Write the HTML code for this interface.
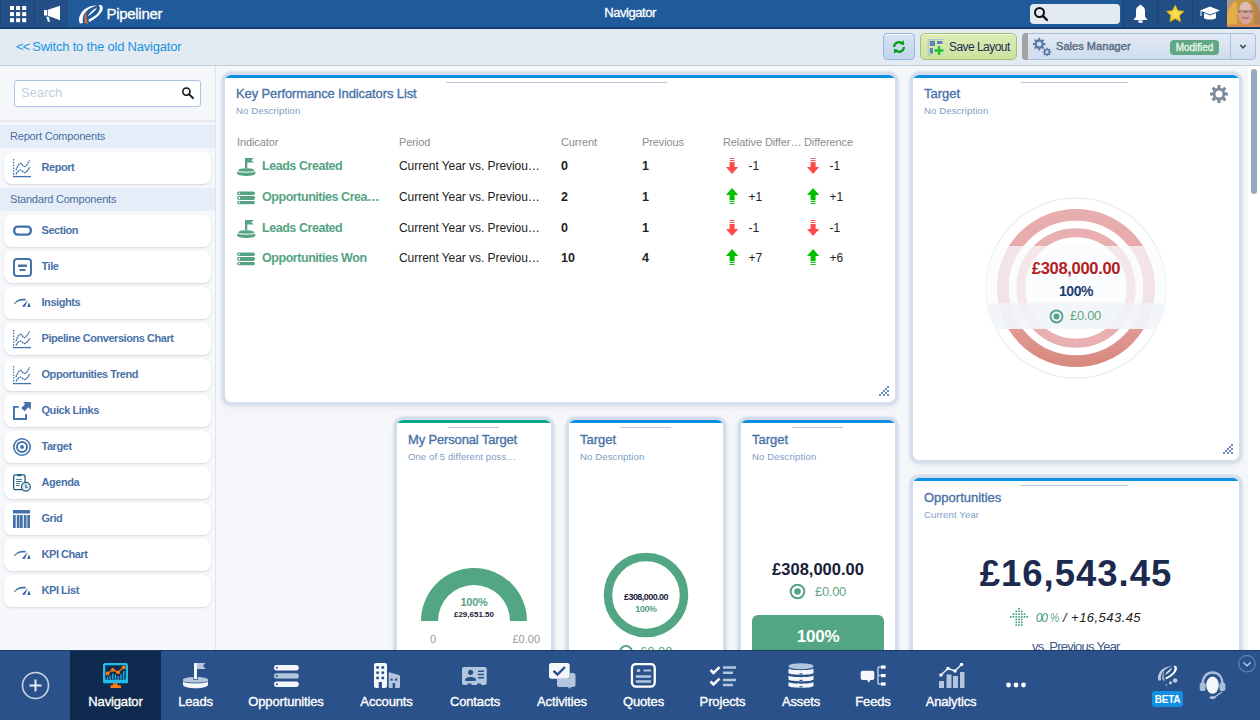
<!DOCTYPE html>
<html><head><meta charset="utf-8"><title>Navigator</title>
<style>
*{box-sizing:border-box;margin:0;padding:0}
html,body{width:1260px;height:720px;overflow:hidden;background:#f4f6fa;font-family:"Liberation Sans",sans-serif}
.a{position:absolute}
.t{position:absolute;white-space:nowrap}
.card{position:absolute;border:3px solid #d3deea;border-radius:9px;background:#fff;overflow:hidden;box-shadow:0 0 0 0.7px #dae2ec,0 2px 5px rgba(40,70,110,.10)}
.card .strip{position:absolute;left:0;top:0;right:0;height:3px}
.sbi{position:absolute;left:4px;width:207px;height:32px;background:#fff;border-radius:8px;box-shadow:0 1px 2px rgba(0,0,0,.13)}
</style></head><body>

<div class="a" style="left:216px;top:66px;width:1032px;height:584px;background:#f4f6fa"></div>
<div class="a" style="left:0px;top:66px;width:215px;height:584px;background:#f5f7fa"></div>
<div class="a" style="left:215px;top:66px;width:1px;height:584px;background:#dfe5ee"></div>
<div class="a" style="left:1248px;top:66px;width:12px;height:584px;background:#fff"></div>
<div class="a" style="left:1251px;top:69px;width:6px;height:125px;background:#94a8c0;border-radius:3px"></div>
<div class="a" style="left:0px;top:0px;width:1260px;height:27px;background:#1f5b9b"></div>
<div class="a" style="left:0px;top:27px;width:1260px;height:1px;background:#1a4676"></div>
<div class="a" style="left:0px;top:28px;width:1260px;height:1px;background:#0f3562"></div>
<div class="a" style="left:0px;top:0px;width:68px;height:27px;background:#234f86"></div>
<div class="a" style="left:0px;top:0px;width:1px;height:27px;background:#1b4373"></div>
<div class="a" style="left:34px;top:0px;width:1px;height:27px;background:#1d4576"></div>
<svg class="a" style="left:0px;top:0px" width="34" height="27" viewBox="0 0 34 27"><rect x="10.0" y="6.0" width="4" height="4" fill="#fff"/><rect x="16.1" y="6.0" width="4" height="4" fill="#fff"/><rect x="22.2" y="6.0" width="4" height="4" fill="#fff"/><rect x="10.0" y="12.1" width="4" height="4" fill="#fff"/><rect x="16.1" y="12.1" width="4" height="4" fill="#fff"/><rect x="22.2" y="12.1" width="4" height="4" fill="#fff"/><rect x="10.0" y="18.2" width="4" height="4" fill="#fff"/><rect x="16.1" y="18.2" width="4" height="4" fill="#fff"/><rect x="22.2" y="18.2" width="4" height="4" fill="#fff"/></svg>
<svg class="a" style="left:35px;top:0px" width="33" height="27" viewBox="0 0 33 27"><path d="M9 10 h3.3 v5.6 h-3.3z M13 9.8 L25 5.8 V20.3 L13 15.8 Z M11.3 16.8 h2.4 l1.3 5 h-2.1z" fill="#fff"/></svg>
<svg class="a" style="left:76px;top:2px" width="30" height="24" viewBox="0 0 30 24"><path d="M4 21.5 C1.5 17 4 11 9 7 C13 4 18 3 21 3.5 C17 4.5 13 6.5 10.5 9 C7.5 12 6 16 7 21 Z" fill="#fff"/><path d="M22.5 3 C26 2.5 27.5 4.5 26.5 8 C25 12 20 16.5 13 20 L12.5 17.5 C18 15 22.5 11.5 23.5 8 C24.3 5.5 23.5 4 22.5 3 Z" fill="#fff"/><path d="M12 14 C14 10 18 7 21 5.5 C20 8 17 11 12.5 14 Z" fill="#fff"/><path d="M10.5 9.5 C9 12 8 16 8.5 19 C9 21 10 22 12 21.5 C10.5 19 10 14 10.5 9.5 Z" fill="#f26b3a"/></svg>
<div class="t" style="left:106.5px;top:6.00px;font-size:15px;line-height:15px;color:#fff;font-weight:normal;letter-spacing:-0.3px;-webkit-text-stroke:0.3px #fff">Pipeliner</div>
<div class="t" style="left:430.00px;width:400px;text-align:center;top:6.00px;font-size:13px;line-height:13px;color:#fff;font-weight:normal;letter-spacing:-0.45px;-webkit-text-stroke:0.3px #fff">Navigator</div>
<div class="a" style="left:1030px;top:4px;width:90px;height:20px;background:#e4eaf2;border-radius:4px"></div>
<svg class="a" style="left:1033px;top:6px" width="16" height="16" viewBox="0 0 16 16"><circle cx="6.5" cy="6.5" r="4.5" stroke="#111" stroke-width="2" fill="none"/><path d="M9.8 9.8 L14 14" stroke="#111" stroke-width="2.4" stroke-linecap="round"/></svg>
<div class="a" style="left:1122px;top:0px;width:105px;height:27px;background:#214f85"></div>
<div class="a" style="left:1122px;top:0px;width:1px;height:27px;background:#1b4373"></div>
<div class="a" style="left:1157px;top:0px;width:1px;height:27px;background:#1b4373"></div>
<div class="a" style="left:1192px;top:0px;width:1px;height:27px;background:#1b4373"></div>
<svg class="a" style="left:1123px;top:0px" width="34" height="27" viewBox="0 0 34 27"><circle cx="17.5" cy="6.3" r="1.6" fill="#fff"/><path d="M17.5 6 C14 6 13 8.5 13 11 V16 C13 17.5 11.5 18.5 10.3 19.9 H24.7 C23.5 18.5 22 17.5 22 16 V11 C22 8.5 21 6 17.5 6Z" fill="#fff"/><ellipse cx="17.5" cy="21.6" rx="2.5" ry="1.4" fill="#fff"/></svg>
<svg class="a" style="left:1158px;top:0px" width="34" height="27" viewBox="0 0 34 27"><defs><radialGradient id="stg" cx="0.5" cy="0.55" r="0.6"><stop offset="0" stop-color="#ffe866"/><stop offset="1" stop-color="#f0b400"/></radialGradient></defs><path d="M17.20 4.70 L19.90 10.48 L26.24 11.26 L21.57 15.62 L22.78 21.89 L17.20 18.80 L11.62 21.89 L12.83 15.62 L8.16 11.26 L14.50 10.48Z" fill="url(#stg)" stroke="#e0a800" stroke-width="0.4" stroke-linejoin="round"/></svg>
<svg class="a" style="left:1193px;top:0px" width="34" height="27" viewBox="0 0 34 27"><path d="M7 10.5 L17 6.5 L27 10.5 L17 14.5 Z" fill="#fff"/><path d="M11 13 v5 c2 2 10 2 12 0 v-5 l-6 2.5z" fill="#fff"/><path d="M8 11 v5" stroke="#fff" stroke-width="1"/></svg>
<svg class="a" style="left:1227px;top:0px" width="33" height="27" viewBox="0 0 33 27"><defs><filter id="bl" x="-10%" y="-10%" width="120%" height="120%"><feGaussianBlur stdDeviation="0.7"/></filter><clipPath id="avc"><rect width="33" height="27"/></clipPath></defs><g clip-path="url(#avc)"><rect width="33" height="27" fill="#a89c8c"/><g filter="url(#bl)"><path d="M-2 30 C-3 15 2 -2 16 -2 C30 -2 36 12 35 30Z" fill="#c99545"/><path d="M-2 28 C-2 18 1 6 9 1 C12 8 9 20 10 28Z" fill="#e5ad48"/><path d="M26 28 C27 18 29 8 24 1 C32 3 35 15 35 28Z" fill="#b48550"/><ellipse cx="18.5" cy="13.5" rx="7.2" ry="11" fill="#d4a596"/><ellipse cx="18.5" cy="7" rx="5.5" ry="5" fill="#dcbcb4"/><path d="M11.5 10.5 H25.5 V12.8 H11.5Z" fill="#8a6a60"/><ellipse cx="15" cy="12.5" rx="2.2" ry="1.3" fill="#c9a090"/><ellipse cx="22" cy="12.5" rx="2.2" ry="1.3" fill="#c9a090"/><path d="M15 17.5 Q18.5 19 22 17.5" stroke="#9a5a50" stroke-width="1.2" fill="none"/><rect x="0" y="24.5" width="33" height="3" fill="#d88a50"/></g></g></svg>
<div class="a" style="left:0px;top:29px;width:1260px;height:36px;background:#e4eaf2"></div>
<div class="a" style="left:0px;top:65px;width:1260px;height:1px;background:#c3cedb"></div>
<div class="t" style="left:16px;top:40.00px;font-size:13px;line-height:13px;color:#1a94e2;font-weight:normal;letter-spacing:-0.2px"><span style="letter-spacing:-1.2px">&lt;&lt;</span> Switch to the old Navigator</div>
<div class="a" style="left:883px;top:33px;width:32px;height:27px;background:linear-gradient(#d6e3f2,#c2d5ec);border:1px solid #8fb8e4;border-radius:4px;box-shadow:inset 0 1px 0 rgba(255,255,255,.9)"></div>
<svg class="a" style="left:883px;top:33px" width="32" height="27" viewBox="0 0 32 27"><g transform="rotate(-12 16 14)"><path d="M11.2 13 A4.9 4.9 0 0 1 19.8 11" stroke="#0d9c1c" stroke-width="2.3" fill="none"/><path d="M22.2 8.3 L21.5 13.3 L17.2 11.2Z" fill="#0d9c1c"/><path d="M20.8 15 A4.9 4.9 0 0 1 12.2 17" stroke="#0d9c1c" stroke-width="2.3" fill="none"/><path d="M9.8 19.7 L10.5 14.7 L14.8 16.8Z" fill="#0d9c1c"/></g></svg>
<div class="a" style="left:920px;top:33px;width:97px;height:27px;background:linear-gradient(#dcecb6,#cde2a0);border:1px solid #a3c176;border-radius:5px;box-shadow:inset 0 1px 0 rgba(255,255,255,.6)"></div>
<svg class="a" style="left:927px;top:37px" width="20" height="20" viewBox="0 0 20 20"><path d="M16 2.5 H1.2 V17.8 H4" stroke="#a9c1de" stroke-width="0.9" fill="none"/><rect x="2.8" y="3.8" width="5.2" height="5.2" fill="#5b84b8"/><rect x="10" y="4" width="5.5" height="3" fill="#5b84b8"/><rect x="2.8" y="11" width="3.2" height="5.5" fill="#5b84b8"/><path d="M12 9 V18 M7.5 13.5 H16.5" stroke="#1ec23a" stroke-width="2.4"/></svg>
<div class="t" style="left:949px;top:41.00px;font-size:12px;line-height:12px;color:#1e2d55;font-weight:normal;letter-spacing:-0.55px">Save Layout</div>
<div class="a" style="left:1022px;top:33px;width:234px;height:27px;background:linear-gradient(#e2eaf5,#cfdcec);border:1px solid #a4bfdf;border-radius:4px"></div>
<div class="a" style="left:1022px;top:33px;width:6px;height:27px;background:#a3a3a3;border-radius:4px 0 0 4px"></div>
<div class="a" style="left:1230px;top:33px;width:1px;height:27px;background:#a4bfdf"></div>
<svg class="a" style="left:1031px;top:35px" width="22" height="24" viewBox="0 0 22 24"><g fill="#5b7ca5"><circle cx="8.2" cy="9.1" r="4.7"/><circle cx="16" cy="16.9" r="3.1"/></g><rect x="7.2" y="2.8" width="2" height="2.6" fill="#5b7ca5" transform="rotate(0 8.2 9.1)"/><rect x="7.2" y="2.8" width="2" height="2.6" fill="#5b7ca5" transform="rotate(45 8.2 9.1)"/><rect x="7.2" y="2.8" width="2" height="2.6" fill="#5b7ca5" transform="rotate(90 8.2 9.1)"/><rect x="7.2" y="2.8" width="2" height="2.6" fill="#5b7ca5" transform="rotate(135 8.2 9.1)"/><rect x="7.2" y="2.8" width="2" height="2.6" fill="#5b7ca5" transform="rotate(180 8.2 9.1)"/><rect x="7.2" y="2.8" width="2" height="2.6" fill="#5b7ca5" transform="rotate(225 8.2 9.1)"/><rect x="7.2" y="2.8" width="2" height="2.6" fill="#5b7ca5" transform="rotate(270 8.2 9.1)"/><rect x="7.2" y="2.8" width="2" height="2.6" fill="#5b7ca5" transform="rotate(315 8.2 9.1)"/><rect x="15.25" y="12.7" width="1.5" height="1.9" fill="#5b7ca5" transform="rotate(0 16 16.9)"/><rect x="15.25" y="12.7" width="1.5" height="1.9" fill="#5b7ca5" transform="rotate(45 16 16.9)"/><rect x="15.25" y="12.7" width="1.5" height="1.9" fill="#5b7ca5" transform="rotate(90 16 16.9)"/><rect x="15.25" y="12.7" width="1.5" height="1.9" fill="#5b7ca5" transform="rotate(135 16 16.9)"/><rect x="15.25" y="12.7" width="1.5" height="1.9" fill="#5b7ca5" transform="rotate(180 16 16.9)"/><rect x="15.25" y="12.7" width="1.5" height="1.9" fill="#5b7ca5" transform="rotate(225 16 16.9)"/><rect x="15.25" y="12.7" width="1.5" height="1.9" fill="#5b7ca5" transform="rotate(270 16 16.9)"/><rect x="15.25" y="12.7" width="1.5" height="1.9" fill="#5b7ca5" transform="rotate(315 16 16.9)"/><circle cx="8.2" cy="9.1" r="2.4" fill="#d6e1ee"/><circle cx="16" cy="16.9" r="1.6" fill="#d2ddeb"/></svg>
<div class="t" style="left:1056px;top:41.00px;font-size:11px;line-height:11px;color:#5a6d85;font-weight:normal;letter-spacing:0.05px;-webkit-text-stroke:0.45px #5a6d85">Sales Manager</div>
<div class="a" style="left:1170px;top:40px;width:49px;height:15px;background:#5fa882;border-radius:4px"></div>
<div class="t" style="left:1164.50px;width:60px;text-align:center;top:43.00px;font-size:10px;line-height:10px;color:#e6f3ea;font-weight:normal;letter-spacing:-0.05px;-webkit-text-stroke:0.35px #e6f3ea">Modified</div>
<svg class="a" style="left:1231px;top:33px" width="25" height="27" viewBox="0 0 25 27"><path d="M9.3 12 L12 14.8 L14.7 12" stroke="#33465f" stroke-width="1.5" fill="none"/></svg>
<div class="a" style="left:14px;top:80px;width:187px;height:27px;background:#fff;border:1px solid #a9c5e8;border-radius:3px"></div>
<div class="t" style="left:21px;top:86.00px;font-size:13px;line-height:13px;color:#c3cfdf;font-weight:normal;">Search</div>
<svg class="a" style="left:178px;top:84px" width="18" height="18" viewBox="0 0 18 18"><circle cx="8.4" cy="7.6" r="3.6" stroke="#111" stroke-width="1.6" fill="none"/><path d="M11 10.2 L15 14.2" stroke="#111" stroke-width="1.9" stroke-linecap="round"/></svg>
<div class="a" style="left:0px;top:120px;width:215px;height:2px;background:linear-gradient(#eef0f3,#dfe2e7)"></div>
<div class="a" style="left:0px;top:125px;width:215px;height:23px;background:#e5edf8"></div>
<div class="t" style="left:10px;top:131.00px;font-size:11px;line-height:11px;color:#4a6fa0;font-weight:normal;letter-spacing:-0.2px">Report Components</div>
<div class="a" style="left:0px;top:188px;width:215px;height:23px;background:#e5edf8"></div>
<div class="t" style="left:10px;top:194.00px;font-size:11px;line-height:11px;color:#4a6fa0;font-weight:normal;letter-spacing:-0.2px">Standard Components</div>
<div class="sbi" style="top:152px"></div>
<svg class="a" style="left:13px;top:159px" width="22" height="22" viewBox="0 0 22 22"><path d="M0.6 0 V17" stroke="#4272aa" stroke-width="1.2" stroke-dasharray="1.5 1.3"/><path d="M0 17.6 H18" stroke="#4272aa" stroke-width="1.3"/><path d="M2.9 11.4 C4.5 7 6 4.3 7.5 4.3 C9 4.3 10 7.7 11.25 7.7 C13 7.7 15 4 16.7 1.2" stroke="#4272aa" stroke-width="1.25" fill="none" stroke-dasharray="2.2 0.5"/><path d="M3 15.5 C4.5 12.5 6 11 7.5 11 C9 11 10 13.7 11.5 13.7 C13 13.7 15 11 17 8" stroke="#4272aa" stroke-width="1.25" fill="none" stroke-dasharray="2.2 0.5"/></svg>
<div class="t" style="left:41.5px;top:162.00px;font-size:11px;line-height:11px;color:#4a72a8;font-weight:bold;letter-spacing:-0.45px">Report</div>
<div class="sbi" style="top:215px"></div>
<svg class="a" style="left:13px;top:222px" width="22" height="22" viewBox="0 0 22 22"><rect x="1.2" y="4.6" width="16.6" height="8" rx="3.5" stroke="#4272aa" stroke-width="2.4" fill="none"/></svg>
<div class="t" style="left:41.5px;top:225.00px;font-size:11px;line-height:11px;color:#4a72a8;font-weight:bold;letter-spacing:-0.45px">Section</div>
<div class="sbi" style="top:251px"></div>
<svg class="a" style="left:13px;top:258px" width="22" height="22" viewBox="0 0 22 22"><rect x="1" y="1" width="17" height="17" rx="3" stroke="#4272aa" stroke-width="2" fill="none"/><rect x="5" y="6.5" width="9" height="2.5" fill="#4272aa"/><rect x="6.5" y="11" width="6" height="2" fill="#4272aa"/></svg>
<div class="t" style="left:41.5px;top:261.00px;font-size:11px;line-height:11px;color:#4a72a8;font-weight:bold;letter-spacing:-0.45px">Tile</div>
<div class="sbi" style="top:287px"></div>
<svg class="a" style="left:13px;top:294px" width="22" height="22" viewBox="0 0 22 22"><path d="M1 10 C3 6 8 4.3 12.8 5 L12.3 6.7 C8 5.9 4 7 1.6 10.3Z" fill="#4272aa"/><path d="M14.9 6.1 L9.4 11.9 C9.8 13 11.2 13.4 12 12.6Z" fill="#2d5d9f"/><path d="M15.9 8.4 L14.3 12.9 H17.3 C17.1 11 16.6 9.6 15.9 8.4Z" fill="#2d5d9f"/></svg>
<div class="t" style="left:41.5px;top:297.00px;font-size:11px;line-height:11px;color:#4a72a8;font-weight:bold;letter-spacing:-0.45px">Insights</div>
<div class="sbi" style="top:323px"></div>
<svg class="a" style="left:13px;top:330px" width="22" height="22" viewBox="0 0 22 22"><path d="M0.6 0 V17" stroke="#4272aa" stroke-width="1.2" stroke-dasharray="1.5 1.3"/><path d="M0 17.6 H18" stroke="#4272aa" stroke-width="1.3"/><path d="M2.9 11.4 C4.5 7 6 4.3 7.5 4.3 C9 4.3 10 7.7 11.25 7.7 C13 7.7 15 4 16.7 1.2" stroke="#4272aa" stroke-width="1.25" fill="none" stroke-dasharray="2.2 0.5"/><path d="M3 15.5 C4.5 12.5 6 11 7.5 11 C9 11 10 13.7 11.5 13.7 C13 13.7 15 11 17 8" stroke="#4272aa" stroke-width="1.25" fill="none" stroke-dasharray="2.2 0.5"/></svg>
<div class="t" style="left:41.5px;top:333.00px;font-size:11px;line-height:11px;color:#4a72a8;font-weight:bold;letter-spacing:-0.45px">Pipeline Conversions Chart</div>
<div class="sbi" style="top:359px"></div>
<svg class="a" style="left:13px;top:366px" width="22" height="22" viewBox="0 0 22 22"><path d="M0.6 0 V17" stroke="#4272aa" stroke-width="1.2" stroke-dasharray="1.5 1.3"/><path d="M0 17.6 H18" stroke="#4272aa" stroke-width="1.3"/><path d="M2.9 11.4 C4.5 7 6 4.3 7.5 4.3 C9 4.3 10 7.7 11.25 7.7 C13 7.7 15 4 16.7 1.2" stroke="#4272aa" stroke-width="1.25" fill="none" stroke-dasharray="2.2 0.5"/><path d="M3 15.5 C4.5 12.5 6 11 7.5 11 C9 11 10 13.7 11.5 13.7 C13 13.7 15 11 17 8" stroke="#4272aa" stroke-width="1.25" fill="none" stroke-dasharray="2.2 0.5"/></svg>
<div class="t" style="left:41.5px;top:369.00px;font-size:11px;line-height:11px;color:#4a72a8;font-weight:bold;letter-spacing:-0.45px">Opportunities Trend</div>
<div class="sbi" style="top:395px"></div>
<svg class="a" style="left:13px;top:400px" width="22" height="22" viewBox="0 0 22 22"><path d="M5.8 6.9 H0.95 V19.05 H13.05 V14" stroke="#4272aa" stroke-width="1.9" fill="none"/><path d="M10 1.9 H17.9 V9.8 L15.4 7.3 L11.6 11.2 L8.3 7.9 L12.1 4.1 Z" fill="#4272aa"/></svg>
<div class="t" style="left:41.5px;top:405.00px;font-size:11px;line-height:11px;color:#4a72a8;font-weight:bold;letter-spacing:-0.45px">Quick Links</div>
<div class="sbi" style="top:431px"></div>
<svg class="a" style="left:13px;top:438px" width="22" height="22" viewBox="0 0 22 22"><circle cx="9" cy="9" r="8.2" stroke="#4272aa" stroke-width="1.6" fill="none"/><circle cx="9" cy="9" r="5" stroke="#4272aa" stroke-width="2" fill="none"/><circle cx="9" cy="9" r="2" fill="#4272aa"/></svg>
<div class="t" style="left:41.5px;top:441.00px;font-size:11px;line-height:11px;color:#4a72a8;font-weight:bold;letter-spacing:-0.45px">Target</div>
<div class="sbi" style="top:467px"></div>
<svg class="a" style="left:13px;top:474px" width="22" height="22" viewBox="0 0 22 22"><rect x="0.65" y="0.9" width="11.4" height="14.8" rx="1.6" stroke="#1e5a7c" stroke-width="1.3" fill="none"/><rect x="4.4" y="0.3" width="4" height="1.9" rx="0.5" fill="#1e5a7c"/><path d="M3.1 5.4 H9 M3.1 7.5 H9 M3.1 9.5 H6.8 M3.1 11.5 H6.8" stroke="#1e5a7c" stroke-width="0.85"/><circle cx="12.9" cy="12.8" r="4.4" fill="#e2e9f2" stroke="#1e5a7c" stroke-width="1.2"/><path d="M12.9 10.5 V13.5 H14.6" stroke="#1e5a7c" stroke-width="1" fill="none"/></svg>
<div class="t" style="left:41.5px;top:477.00px;font-size:11px;line-height:11px;color:#4a72a8;font-weight:bold;letter-spacing:-0.45px">Agenda</div>
<div class="sbi" style="top:503px"></div>
<svg class="a" style="left:13px;top:510px" width="22" height="22" viewBox="0 0 22 22"><rect x="0" y="0" width="17" height="3.5" fill="#4272aa"/><rect x="0" y="5" width="2.7" height="13" fill="#4272aa"/><rect x="3.8" y="5" width="2.7" height="13" fill="#4272aa"/><rect x="7" y="5" width="2.7" height="13" fill="#4272aa"/><rect x="10.8" y="5" width="2.7" height="13" fill="#4272aa"/><rect x="14.3" y="5" width="2.7" height="13" fill="#4272aa"/></svg>
<div class="t" style="left:41.5px;top:513.00px;font-size:11px;line-height:11px;color:#4a72a8;font-weight:bold;letter-spacing:-0.45px">Grid</div>
<div class="sbi" style="top:539px"></div>
<svg class="a" style="left:13px;top:546px" width="22" height="22" viewBox="0 0 22 22"><path d="M1 10 C3 6 8 4.3 12.8 5 L12.3 6.7 C8 5.9 4 7 1.6 10.3Z" fill="#4272aa"/><path d="M14.9 6.1 L9.4 11.9 C9.8 13 11.2 13.4 12 12.6Z" fill="#2d5d9f"/><path d="M15.9 8.4 L14.3 12.9 H17.3 C17.1 11 16.6 9.6 15.9 8.4Z" fill="#2d5d9f"/></svg>
<div class="t" style="left:41.5px;top:549.00px;font-size:11px;line-height:11px;color:#4a72a8;font-weight:bold;letter-spacing:-0.45px">KPI Chart</div>
<div class="sbi" style="top:575px"></div>
<svg class="a" style="left:13px;top:582px" width="22" height="22" viewBox="0 0 22 22"><path d="M1 10 C3 6 8 4.3 12.8 5 L12.3 6.7 C8 5.9 4 7 1.6 10.3Z" fill="#4272aa"/><path d="M14.9 6.1 L9.4 11.9 C9.8 13 11.2 13.4 12 12.6Z" fill="#2d5d9f"/><path d="M15.9 8.4 L14.3 12.9 H17.3 C17.1 11 16.6 9.6 15.9 8.4Z" fill="#2d5d9f"/></svg>
<div class="t" style="left:41.5px;top:585.00px;font-size:11px;line-height:11px;color:#4a72a8;font-weight:bold;letter-spacing:-0.45px">KPI List</div>
<div class="card" style="left:222px;top:72px;width:676px;height:333px"><div class="strip" style="background:#0a8fe3"></div></div>
<div class="a" style="left:446px;top:82px;width:221px;height:1px;background:#b9cadf"></div>
<div class="t" style="left:236px;top:87.00px;font-size:13px;line-height:13px;color:#4a72a8;font-weight:normal;letter-spacing:-0.12px;-webkit-text-stroke:0.35px #4a72a8">Key Performance Indicators List</div>
<div class="t" style="left:236px;top:106.00px;font-size:9.5px;line-height:9.5px;color:#7a9bc4;font-weight:normal;letter-spacing:0.15px">No Description</div>
<div class="t" style="left:237px;top:137.00px;font-size:11px;line-height:11px;color:#8c8c8c;font-weight:normal;letter-spacing:-0.1px">Indicator</div>
<div class="t" style="left:399px;top:137.00px;font-size:11px;line-height:11px;color:#8c8c8c;font-weight:normal;letter-spacing:-0.1px">Period</div>
<div class="t" style="left:561px;top:137.00px;font-size:11px;line-height:11px;color:#8c8c8c;font-weight:normal;letter-spacing:-0.1px">Current</div>
<div class="t" style="left:642px;top:137.00px;font-size:11px;line-height:11px;color:#8c8c8c;font-weight:normal;letter-spacing:-0.1px">Previous</div>
<div class="t" style="left:723px;top:137.00px;font-size:11px;line-height:11px;color:#8c8c8c;font-weight:normal;letter-spacing:-0.1px">Relative Differ…</div>
<div class="t" style="left:804px;top:137.00px;font-size:11px;line-height:11px;color:#8c8c8c;font-weight:normal;letter-spacing:-0.1px">Difference</div>
<svg class="a" style="left:237px;top:158px" width="20" height="19" viewBox="0 0 20 19"><path d="M8 0 H17 L14.2 2.2 L17 4.4 H10.3 V10 H8Z" fill="#55a383"/><path d="M1 12.8 C1 9.5 17.5 9.5 17.5 12.8 C15 14 3.5 14 1 12.8Z" fill="#55a383"/><path d="M0.2 13.6 C3 15.2 15.5 15.2 18.3 13.6 V16 C16 18.6 2.5 18.6 0.2 16Z" fill="#55a383"/></svg>
<div class="t" style="left:262px;top:160.00px;font-size:12.5px;line-height:12.5px;color:#55a383;font-weight:bold;letter-spacing:-0.45px">Leads Created</div>
<div class="t" style="left:399px;top:160.00px;font-size:12px;line-height:12px;color:#222;font-weight:normal;letter-spacing:-0.05px">Current Year vs. Previou…</div>
<div class="t" style="left:561px;top:160.00px;font-size:12.5px;line-height:12.5px;color:#222;font-weight:bold;">0</div>
<div class="t" style="left:642px;top:160.00px;font-size:12.5px;line-height:12.5px;color:#222;font-weight:bold;">1</div>
<svg class="a" style="left:726px;top:157px" width="13" height="18" viewBox="0 0 13 18"><rect x="3.6" y="1" width="5" height="1" fill="#ff5a5a"/><rect x="3.6" y="3" width="5" height="1" fill="#ff5a5a"/><path d="M3.6 5 H8.6 V10 H12.2 L6.1 17 L0 10 H3.6Z" fill="#ff4a4a"/></svg>
<div class="t" style="left:748.5px;top:160.00px;font-size:12px;line-height:12px;color:#222;font-weight:normal;">-1</div>
<svg class="a" style="left:807px;top:157px" width="13" height="18" viewBox="0 0 13 18"><rect x="3.6" y="1" width="5" height="1" fill="#ff5a5a"/><rect x="3.6" y="3" width="5" height="1" fill="#ff5a5a"/><path d="M3.6 5 H8.6 V10 H12.2 L6.1 17 L0 10 H3.6Z" fill="#ff4a4a"/></svg>
<div class="t" style="left:829.5px;top:160.00px;font-size:12px;line-height:12px;color:#222;font-weight:normal;">-1</div>
<svg class="a" style="left:236px;top:191px" width="20" height="15" viewBox="0 0 20 15"><rect x="1" y="0.5" width="18" height="3.5" rx="1.75" fill="#55a383"/><rect x="1" y="5" width="18" height="3.9" rx="1.9" fill="#55a383"/><rect x="1" y="9.9" width="18" height="3.4" rx="1.7" fill="#55a383"/><circle cx="3.3" cy="2.25" r="0.8" fill="#fff"/><rect x="2.6" y="5.9" width="1.3" height="2.2" fill="#fff"/><circle cx="3.3" cy="11.6" r="0.8" fill="#fff"/></svg>
<div class="t" style="left:262px;top:191.00px;font-size:12.5px;line-height:12.5px;color:#55a383;font-weight:bold;letter-spacing:-0.45px">Opportunities Crea…</div>
<div class="t" style="left:399px;top:191.00px;font-size:12px;line-height:12px;color:#222;font-weight:normal;letter-spacing:-0.05px">Current Year vs. Previou…</div>
<div class="t" style="left:561px;top:191.00px;font-size:12.5px;line-height:12.5px;color:#222;font-weight:bold;">2</div>
<div class="t" style="left:642px;top:191.00px;font-size:12.5px;line-height:12.5px;color:#222;font-weight:bold;">1</div>
<svg class="a" style="left:726px;top:188px" width="13" height="18" viewBox="0 0 13 18"><path d="M6.1 0 L12.2 7 H8.6 V12.2 H3.6 V7 H0Z" fill="#00c000"/><rect x="3.6" y="13" width="5" height="1" fill="#11c511"/><rect x="3.6" y="15" width="5" height="1" fill="#11c511"/></svg>
<div class="t" style="left:748.5px;top:191.00px;font-size:12px;line-height:12px;color:#222;font-weight:normal;">+1</div>
<svg class="a" style="left:807px;top:188px" width="13" height="18" viewBox="0 0 13 18"><path d="M6.1 0 L12.2 7 H8.6 V12.2 H3.6 V7 H0Z" fill="#00c000"/><rect x="3.6" y="13" width="5" height="1" fill="#11c511"/><rect x="3.6" y="15" width="5" height="1" fill="#11c511"/></svg>
<div class="t" style="left:829.5px;top:191.00px;font-size:12px;line-height:12px;color:#222;font-weight:normal;">+1</div>
<svg class="a" style="left:237px;top:220px" width="20" height="19" viewBox="0 0 20 19"><path d="M8 0 H17 L14.2 2.2 L17 4.4 H10.3 V10 H8Z" fill="#55a383"/><path d="M1 12.8 C1 9.5 17.5 9.5 17.5 12.8 C15 14 3.5 14 1 12.8Z" fill="#55a383"/><path d="M0.2 13.6 C3 15.2 15.5 15.2 18.3 13.6 V16 C16 18.6 2.5 18.6 0.2 16Z" fill="#55a383"/></svg>
<div class="t" style="left:262px;top:222.00px;font-size:12.5px;line-height:12.5px;color:#55a383;font-weight:bold;letter-spacing:-0.45px">Leads Created</div>
<div class="t" style="left:399px;top:222.00px;font-size:12px;line-height:12px;color:#222;font-weight:normal;letter-spacing:-0.05px">Current Year vs. Previou…</div>
<div class="t" style="left:561px;top:222.00px;font-size:12.5px;line-height:12.5px;color:#222;font-weight:bold;">0</div>
<div class="t" style="left:642px;top:222.00px;font-size:12.5px;line-height:12.5px;color:#222;font-weight:bold;">1</div>
<svg class="a" style="left:726px;top:219px" width="13" height="18" viewBox="0 0 13 18"><rect x="3.6" y="1" width="5" height="1" fill="#ff5a5a"/><rect x="3.6" y="3" width="5" height="1" fill="#ff5a5a"/><path d="M3.6 5 H8.6 V10 H12.2 L6.1 17 L0 10 H3.6Z" fill="#ff4a4a"/></svg>
<div class="t" style="left:748.5px;top:222.00px;font-size:12px;line-height:12px;color:#222;font-weight:normal;">-1</div>
<svg class="a" style="left:807px;top:219px" width="13" height="18" viewBox="0 0 13 18"><rect x="3.6" y="1" width="5" height="1" fill="#ff5a5a"/><rect x="3.6" y="3" width="5" height="1" fill="#ff5a5a"/><path d="M3.6 5 H8.6 V10 H12.2 L6.1 17 L0 10 H3.6Z" fill="#ff4a4a"/></svg>
<div class="t" style="left:829.5px;top:222.00px;font-size:12px;line-height:12px;color:#222;font-weight:normal;">-1</div>
<svg class="a" style="left:236px;top:252px" width="20" height="15" viewBox="0 0 20 15"><rect x="1" y="0.5" width="18" height="3.5" rx="1.75" fill="#55a383"/><rect x="1" y="5" width="18" height="3.9" rx="1.9" fill="#55a383"/><rect x="1" y="9.9" width="18" height="3.4" rx="1.7" fill="#55a383"/><circle cx="3.3" cy="2.25" r="0.8" fill="#fff"/><rect x="2.6" y="5.9" width="1.3" height="2.2" fill="#fff"/><circle cx="3.3" cy="11.6" r="0.8" fill="#fff"/></svg>
<div class="t" style="left:262px;top:252.00px;font-size:12.5px;line-height:12.5px;color:#55a383;font-weight:bold;letter-spacing:-0.45px">Opportunities Won</div>
<div class="t" style="left:399px;top:252.00px;font-size:12px;line-height:12px;color:#222;font-weight:normal;letter-spacing:-0.05px">Current Year vs. Previou…</div>
<div class="t" style="left:561px;top:252.00px;font-size:12.5px;line-height:12.5px;color:#222;font-weight:bold;">10</div>
<div class="t" style="left:642px;top:252.00px;font-size:12.5px;line-height:12.5px;color:#222;font-weight:bold;">4</div>
<svg class="a" style="left:726px;top:249px" width="13" height="18" viewBox="0 0 13 18"><path d="M6.1 0 L12.2 7 H8.6 V12.2 H3.6 V7 H0Z" fill="#00c000"/><rect x="3.6" y="13" width="5" height="1" fill="#11c511"/><rect x="3.6" y="15" width="5" height="1" fill="#11c511"/></svg>
<div class="t" style="left:748.5px;top:252.00px;font-size:12px;line-height:12px;color:#222;font-weight:normal;">+7</div>
<svg class="a" style="left:807px;top:249px" width="13" height="18" viewBox="0 0 13 18"><path d="M6.1 0 L12.2 7 H8.6 V12.2 H3.6 V7 H0Z" fill="#00c000"/><rect x="3.6" y="13" width="5" height="1" fill="#11c511"/><rect x="3.6" y="15" width="5" height="1" fill="#11c511"/></svg>
<div class="t" style="left:829.5px;top:252.00px;font-size:12px;line-height:12px;color:#222;font-weight:normal;">+6</div>
<svg class="a" style="left:879px;top:386px" width="11" height="11" viewBox="0 0 11 11"><rect x="0" y="8" width="2" height="2" fill="#6a8dba"/><rect x="2" y="6" width="2" height="2" fill="#6a8dba"/><rect x="4" y="4" width="2" height="2" fill="#6a8dba"/><rect x="4" y="8" width="2" height="2" fill="#6a8dba"/><rect x="6" y="2" width="2" height="2" fill="#6a8dba"/><rect x="6" y="6" width="2" height="2" fill="#6a8dba"/><rect x="8" y="0" width="2" height="2" fill="#6a8dba"/><rect x="8" y="4" width="2" height="2" fill="#6a8dba"/><rect x="8" y="8" width="2" height="2" fill="#6a8dba"/></svg>
<div class="card" style="left:910px;top:72px;width:332px;height:391px"><div class="strip" style="background:#0a8fe3"></div></div>
<div class="a" style="left:1021px;top:82px;width:107px;height:1px;background:#b9cadf"></div>
<div class="t" style="left:924px;top:87.00px;font-size:13px;line-height:13px;color:#4a72a8;font-weight:normal;-webkit-text-stroke:0.35px #4a72a8">Target</div>
<div class="t" style="left:924px;top:106.00px;font-size:9.5px;line-height:9.5px;color:#7a9bc4;font-weight:normal;letter-spacing:0.15px">No Description</div>
<svg class="a" style="left:1209px;top:84px" width="20" height="20" viewBox="0 0 20 20"><g transform="translate(10 10)"><rect x="-1.6" y="-9" width="3.2" height="4" rx="0.6" fill="#7b8c9c" transform="rotate(0)"/><rect x="-1.6" y="-9" width="3.2" height="4" rx="0.6" fill="#7b8c9c" transform="rotate(45)"/><rect x="-1.6" y="-9" width="3.2" height="4" rx="0.6" fill="#7b8c9c" transform="rotate(90)"/><rect x="-1.6" y="-9" width="3.2" height="4" rx="0.6" fill="#7b8c9c" transform="rotate(135)"/><rect x="-1.6" y="-9" width="3.2" height="4" rx="0.6" fill="#7b8c9c" transform="rotate(180)"/><rect x="-1.6" y="-9" width="3.2" height="4" rx="0.6" fill="#7b8c9c" transform="rotate(225)"/><rect x="-1.6" y="-9" width="3.2" height="4" rx="0.6" fill="#7b8c9c" transform="rotate(270)"/><rect x="-1.6" y="-9" width="3.2" height="4" rx="0.6" fill="#7b8c9c" transform="rotate(315)"/><circle r="6.3" fill="#7b8c9c"/><circle r="3.5" fill="#fff"/></g></svg>
<svg class="a" style="left:981px;top:193px" width="190" height="190" viewBox="0 0 190 190"><defs><linearGradient id="rg" x1="0" y1="0" x2="0" y2="1"><stop offset="0" stop-color="#e8adae"/><stop offset="0.6" stop-color="#e5a6a6"/><stop offset="1" stop-color="#d88a7e"/></linearGradient></defs><circle cx="95" cy="95" r="90" fill="#fff" stroke="#eff0f2" stroke-width="1.5"/><circle cx="95" cy="95" r="73.2" fill="none" stroke="url(#rg)" stroke-width="11.8"/><circle cx="95" cy="95" r="55.2" fill="none" stroke="#e9b0b1" stroke-width="9.1"/><clipPath id="gc"><circle cx="95" cy="95" r="90"/></clipPath><g clip-path="url(#gc)"><rect x="0" y="53" width="190" height="83" fill="#fafbfd" opacity="0.72"/><rect x="0" y="110" width="190" height="26" fill="#f0f3f7" opacity="0.8"/></g></svg>
<div class="t" style="left:876.00px;width:400px;text-align:center;top:260.00px;font-size:16.5px;line-height:16.5px;color:#b41d1d;font-weight:bold;letter-spacing:-0.3px">£308,000.00</div>
<div class="t" style="left:876.00px;width:400px;text-align:center;top:284.00px;font-size:14px;line-height:14px;color:#1d3f70;font-weight:bold;letter-spacing:-0.4px">100%</div>
<svg class="a" style="left:1049px;top:309px" width="15" height="15" viewBox="0 0 15 15"><circle cx="7.5" cy="7.5" r="6" stroke="#55a383" stroke-width="1.8" fill="none"/><circle cx="7.5" cy="7.5" r="3" fill="#55a383"/></svg>
<div class="t" style="left:1070px;top:309.00px;font-size:13px;line-height:13px;color:#5fa882;font-weight:normal;letter-spacing:-0.3px">£0.00</div>
<svg class="a" style="left:1223px;top:444px" width="11" height="11" viewBox="0 0 11 11"><rect x="0" y="8" width="2" height="2" fill="#6a8dba"/><rect x="2" y="6" width="2" height="2" fill="#6a8dba"/><rect x="4" y="4" width="2" height="2" fill="#6a8dba"/><rect x="4" y="8" width="2" height="2" fill="#6a8dba"/><rect x="6" y="2" width="2" height="2" fill="#6a8dba"/><rect x="6" y="6" width="2" height="2" fill="#6a8dba"/><rect x="8" y="0" width="2" height="2" fill="#6a8dba"/><rect x="8" y="4" width="2" height="2" fill="#6a8dba"/><rect x="8" y="8" width="2" height="2" fill="#6a8dba"/></svg>
<div class="card" style="left:910px;top:475px;width:332px;height:260px"><div class="strip" style="background:#0a8fe3"></div></div>
<div class="a" style="left:1021px;top:485px;width:107px;height:1px;background:#b9cadf"></div>
<div class="t" style="left:924px;top:491.00px;font-size:13px;line-height:13px;color:#4a72a8;font-weight:normal;-webkit-text-stroke:0.35px #4a72a8">Opportunities</div>
<div class="t" style="left:924px;top:510.00px;font-size:9.5px;line-height:9.5px;color:#7a9bc4;font-weight:normal;letter-spacing:0.15px">Current Year</div>
<div class="t" style="left:876.00px;width:400px;text-align:center;top:556.00px;font-size:36.5px;line-height:36.5px;color:#1d2a50;font-weight:bold;letter-spacing:1px">£16,543.45</div>
<svg class="a" style="left:1010px;top:607px" width="19" height="20" viewBox="0 0 19 20"><rect x="8.20" y="0.90" width="1.6" height="1.6" fill="#3f9a74"/><rect x="5.45" y="3.62" width="1.6" height="1.6" fill="#3f9a74"/><rect x="8.20" y="3.62" width="1.6" height="1.6" fill="#3f9a74"/><rect x="10.95" y="3.62" width="1.6" height="1.6" fill="#3f9a74"/><rect x="2.70" y="6.34" width="1.6" height="1.6" fill="#3f9a74"/><rect x="5.45" y="6.34" width="1.6" height="1.6" fill="#3f9a74"/><rect x="8.20" y="6.34" width="1.6" height="1.6" fill="#3f9a74"/><rect x="10.95" y="6.34" width="1.6" height="1.6" fill="#3f9a74"/><rect x="13.70" y="6.34" width="1.6" height="1.6" fill="#3f9a74"/><rect x="-0.05" y="9.06" width="1.6" height="1.6" fill="#3f9a74"/><rect x="2.70" y="9.06" width="1.6" height="1.6" fill="#3f9a74"/><rect x="5.45" y="9.06" width="1.6" height="1.6" fill="#3f9a74"/><rect x="8.20" y="9.06" width="1.6" height="1.6" fill="#3f9a74"/><rect x="10.95" y="9.06" width="1.6" height="1.6" fill="#3f9a74"/><rect x="13.70" y="9.06" width="1.6" height="1.6" fill="#3f9a74"/><rect x="16.45" y="9.06" width="1.6" height="1.6" fill="#3f9a74"/><rect x="5.45" y="11.78" width="1.6" height="1.6" fill="#3f9a74"/><rect x="8.20" y="11.78" width="1.6" height="1.6" fill="#3f9a74"/><rect x="10.95" y="11.78" width="1.6" height="1.6" fill="#3f9a74"/><rect x="5.45" y="14.50" width="1.6" height="1.6" fill="#3f9a74"/><rect x="8.20" y="14.50" width="1.6" height="1.6" fill="#3f9a74"/><rect x="10.95" y="14.50" width="1.6" height="1.6" fill="#3f9a74"/><rect x="5.45" y="17.22" width="1.6" height="1.6" fill="#3f9a74"/><rect x="8.20" y="17.22" width="1.6" height="1.6" fill="#3f9a74"/><rect x="10.95" y="17.22" width="1.6" height="1.6" fill="#3f9a74"/></svg>
<div class="t" style="left:1035.5px;top:611.00px;font-size:13px;line-height:13px;color:#55a383;font-weight:normal;font-style:italic"><span style="display:inline-block;letter-spacing:-1.4px;transform:scale(0.95,1.25);transform-origin:0 85%">oo</span><span style="display:inline-block;transform:scaleX(0.8);transform-origin:left">&nbsp;%</span></div>
<div class="t" style="left:1063px;top:611.00px;font-size:13px;line-height:13px;color:#222;font-weight:normal;font-style:italic;letter-spacing:0.45px">/ +16,543.45</div>
<div class="t" style="left:1032px;top:640.00px;font-size:13px;line-height:13px;color:#3d5a85;font-weight:normal;letter-spacing:-0.75px">vs. Previous Year</div>
<div class="card" style="left:394px;top:417px;width:160px;height:260px"><div class="strip" style="background:#07a78a"></div></div>
<div class="a" style="left:448px;top:427px;width:51px;height:1px;background:#b9cadf"></div>
<div class="t" style="left:408px;top:433.00px;font-size:13px;line-height:13px;color:#4a72a8;font-weight:normal;letter-spacing:-0.15px;-webkit-text-stroke:0.35px #4a72a8">My Personal Target</div>
<div class="t" style="left:408px;top:452.00px;font-size:9.5px;line-height:9.5px;color:#7a9bc4;font-weight:normal;letter-spacing:0.1px">One of 5 different poss…</div>
<svg class="a" style="left:420px;top:567px" width="108" height="55" viewBox="0 0 108 55"><path d="M1 54 A53 53 0 0 1 107 54 H90 A36 36 0 0 0 18 54 Z" fill="#52a683"/></svg>
<div class="t" style="left:274.00px;width:400px;text-align:center;top:597.00px;font-size:11px;line-height:11px;color:#55a383;font-weight:bold;letter-spacing:-0.3px">100%</div>
<div class="t" style="left:274.00px;width:400px;text-align:center;top:611.00px;font-size:8px;line-height:8px;color:#1b1b3a;font-weight:bold;">£29,651.50</div>
<div class="t" style="left:430px;top:634.00px;font-size:11px;line-height:11px;color:#999;font-weight:normal;">0</div>
<div class="t" style="left:140.00px;width:400px;text-align:right;top:634.00px;font-size:11px;line-height:11px;color:#999;font-weight:normal;">£0.00</div>
<div class="card" style="left:566px;top:417px;width:160px;height:260px"><div class="strip" style="background:#0a8fe3"></div></div>
<div class="a" style="left:620px;top:427px;width:51px;height:1px;background:#b9cadf"></div>
<div class="t" style="left:580px;top:433.00px;font-size:13px;line-height:13px;color:#4a72a8;font-weight:normal;-webkit-text-stroke:0.35px #4a72a8">Target</div>
<div class="t" style="left:580px;top:452.00px;font-size:9.5px;line-height:9.5px;color:#7a9bc4;font-weight:normal;letter-spacing:0.15px">No Description</div>
<svg class="a" style="left:602px;top:551px" width="88" height="88" viewBox="0 0 88 88"><circle cx="44" cy="44" r="38" stroke="#52a683" stroke-width="8.5" fill="none"/></svg>
<div class="t" style="left:446.00px;width:400px;text-align:center;top:593.00px;font-size:9px;line-height:9px;color:#1b1b3a;font-weight:bold;letter-spacing:-0.55px">£308,000.00</div>
<div class="t" style="left:446.00px;width:400px;text-align:center;top:605.00px;font-size:9px;line-height:9px;color:#55a383;font-weight:bold;letter-spacing:-0.4px">100%</div>
<svg class="a" style="left:618px;top:644px" width="16" height="16" viewBox="0 0 16 16"><circle cx="8" cy="8" r="6" stroke="#55a383" stroke-width="2" fill="none"/></svg>
<div class="t" style="left:640px;top:645.00px;font-size:13px;line-height:13px;color:#5fa882;font-weight:normal;">£0.00</div>
<div class="card" style="left:738px;top:417px;width:160px;height:260px"><div class="strip" style="background:#0a8fe3"></div></div>
<div class="a" style="left:792px;top:427px;width:51px;height:1px;background:#b9cadf"></div>
<div class="t" style="left:752px;top:433.00px;font-size:13px;line-height:13px;color:#4a72a8;font-weight:normal;-webkit-text-stroke:0.35px #4a72a8">Target</div>
<div class="t" style="left:752px;top:452.00px;font-size:9.5px;line-height:9.5px;color:#7a9bc4;font-weight:normal;letter-spacing:0.15px">No Description</div>
<div class="t" style="left:618.00px;width:400px;text-align:center;top:561.00px;font-size:16.5px;line-height:16.5px;color:#1b1b3a;font-weight:bold;letter-spacing:0px">£308,000.00</div>
<svg class="a" style="left:789px;top:583px" width="17" height="17" viewBox="0 0 17 17"><circle cx="8.5" cy="8.5" r="6.8" stroke="#55a383" stroke-width="2" fill="none"/><circle cx="8.5" cy="8.5" r="3.3" fill="#55a383"/></svg>
<div class="t" style="left:815px;top:585.00px;font-size:13px;line-height:13px;color:#5fa882;font-weight:normal;letter-spacing:-0.3px">£0.00</div>
<div class="a" style="left:752px;top:615px;width:132px;height:50px;background:#52a683;border-radius:6px"></div>
<div class="t" style="left:618.00px;width:400px;text-align:center;top:628.00px;font-size:17px;line-height:17px;color:#fff;font-weight:bold;letter-spacing:-0.2px">100%</div>
<div class="a" style="left:0px;top:650px;width:1260px;height:70px;background:#2a5189"></div>
<div class="a" style="left:0px;top:650px;width:1260px;height:1px;background:#1c3c6a"></div>
<div class="a" style="left:70px;top:651px;width:91px;height:69px;background:#0e2a4e"></div>
<svg class="a" style="left:21px;top:671px" width="29" height="29" viewBox="0 0 29 29"><circle cx="14.5" cy="14.5" r="13" stroke="#c9d5e5" stroke-width="1.6" fill="none"/><path d="M14.5 8.5 V20.5 M8.5 14.5 H20.5" stroke="#e8eef6" stroke-width="2"/></svg>
<div class="t" style="left:55.50px;width:120px;text-align:center;top:695.00px;font-size:13px;line-height:13px;color:#fff;font-weight:normal;letter-spacing:-0.15px;-webkit-text-stroke:0.35px #fff">Navigator</div>
<div class="t" style="left:135.50px;width:120px;text-align:center;top:695.00px;font-size:13px;line-height:13px;color:#fff;font-weight:normal;letter-spacing:-0.15px;-webkit-text-stroke:0.35px #fff">Leads</div>
<div class="t" style="left:226.00px;width:120px;text-align:center;top:695.00px;font-size:13px;line-height:13px;color:#fff;font-weight:normal;letter-spacing:-0.15px;-webkit-text-stroke:0.35px #fff">Opportunities</div>
<div class="t" style="left:326.50px;width:120px;text-align:center;top:695.00px;font-size:13px;line-height:13px;color:#fff;font-weight:normal;letter-spacing:-0.15px;-webkit-text-stroke:0.35px #fff">Accounts</div>
<div class="t" style="left:415.00px;width:120px;text-align:center;top:695.00px;font-size:13px;line-height:13px;color:#fff;font-weight:normal;letter-spacing:-0.15px;-webkit-text-stroke:0.35px #fff">Contacts</div>
<div class="t" style="left:502.00px;width:120px;text-align:center;top:695.00px;font-size:13px;line-height:13px;color:#fff;font-weight:normal;letter-spacing:-0.15px;-webkit-text-stroke:0.35px #fff">Activities</div>
<div class="t" style="left:583.50px;width:120px;text-align:center;top:695.00px;font-size:13px;line-height:13px;color:#fff;font-weight:normal;letter-spacing:-0.15px;-webkit-text-stroke:0.35px #fff">Quotes</div>
<div class="t" style="left:662.50px;width:120px;text-align:center;top:695.00px;font-size:13px;line-height:13px;color:#fff;font-weight:normal;letter-spacing:-0.15px;-webkit-text-stroke:0.35px #fff">Projects</div>
<div class="t" style="left:741.00px;width:120px;text-align:center;top:695.00px;font-size:13px;line-height:13px;color:#fff;font-weight:normal;letter-spacing:-0.15px;-webkit-text-stroke:0.35px #fff">Assets</div>
<div class="t" style="left:813.00px;width:120px;text-align:center;top:695.00px;font-size:13px;line-height:13px;color:#fff;font-weight:normal;letter-spacing:-0.15px;-webkit-text-stroke:0.35px #fff">Feeds</div>
<div class="t" style="left:891.00px;width:120px;text-align:center;top:695.00px;font-size:13px;line-height:13px;color:#fff;font-weight:normal;letter-spacing:-0.15px;-webkit-text-stroke:0.35px #fff">Analytics</div>
<svg class="a" style="left:102px;top:663px" width="27" height="26" viewBox="0 0 27 26"><rect x="2.15" y="1.15" width="22.7" height="17.5" rx="1.2" stroke="#22bce9" stroke-width="2.3" fill="#0e2a4e"/><rect x="1" y="16.5" width="25" height="3.8" rx="1" fill="#22bce9"/><rect x="4.85" y="14" width="1.3" height="2" fill="#22b8e8"/><rect x="7.35" y="12.5" width="1.3" height="3.5" fill="#22b8e8"/><rect x="10.15" y="10.5" width="1.3" height="5.5" fill="#22b8e8"/><rect x="12.85" y="11.5" width="1.3" height="4.5" fill="#22b8e8"/><rect x="15.65" y="13" width="1.3" height="3" fill="#22b8e8"/><rect x="18.35" y="11" width="1.3" height="5" fill="#22b8e8"/><rect x="21.05" y="8" width="1.3" height="8" fill="#22b8e8"/><path d="M5.5 10.5 L10.8 6.8 L16.2 9.3 L21.7 4.3" stroke="#f97a12" stroke-width="1.3" fill="none"/><circle cx="5.5" cy="10.5" r="1.9" fill="#f97a12"/><circle cx="10.8" cy="6.8" r="1.9" fill="#f97a12"/><circle cx="16.2" cy="9.3" r="1.9" fill="#f97a12"/><circle cx="21.7" cy="4.3" r="1.9" fill="#f97a12"/><path d="M11 20.3 H15.5 V22 L19 22.5 V25 H8.5 V22.5 L11 22Z" fill="#f97a12"/></svg>
<svg class="a" style="left:182px;top:663px" width="27" height="26" viewBox="0 0 27 26"><path d="M1 17.5 C1 13 26 13 26 17.5 V21.5 C26 26.5 1 26.5 1 21.5Z" fill="#f3f6fb"/><ellipse cx="13.5" cy="16.8" rx="12.5" ry="2.9" fill="#b4c6de"/><path d="M1.2 18.3 C4 20.5 23 20.5 25.8 18.3" stroke="#2a5189" stroke-width="0.9" fill="none"/><rect x="11.3" y="-0.6" width="4.4" height="17.4" fill="#2a5189"/><rect x="12" y="-0.4" width="3" height="16.4" fill="#f3f6fb"/><path d="M15 -0.4 H23.8 L21 2.8 L23.8 6 H15Z" fill="#b4c6de"/></svg>
<svg class="a" style="left:273px;top:663px" width="27" height="26" viewBox="0 0 27 26"><rect x="1" y="2" width="24.8" height="5.4" rx="2.7" fill="#f3f6fb"/><rect x="1" y="10.3" width="24.8" height="5.3" rx="2.65" fill="#b4c6de"/><rect x="1" y="18.5" width="24.8" height="5.5" rx="2.75" fill="#f3f6fb"/><circle cx="3.8" cy="4.7" r="1" fill="#2a5189"/><circle cx="3.8" cy="12.95" r="1" fill="#2a5189"/><circle cx="3.8" cy="21.25" r="1" fill="#2a5189"/></svg>
<svg class="a" style="left:373px;top:663px" width="27" height="26" viewBox="0 0 27 26"><rect x="1" y="0" width="13" height="25" rx="2" fill="#f3f6fb"/><circle cx="4.6" cy="4.5" r="1.45" fill="#2a5189"/><circle cx="4.6" cy="9.8" r="1.45" fill="#2a5189"/><circle cx="4.6" cy="15" r="1.45" fill="#2a5189"/><circle cx="9.8" cy="4.5" r="1.45" fill="#2a5189"/><circle cx="9.8" cy="9.8" r="1.45" fill="#2a5189"/><circle cx="9.8" cy="15" r="1.45" fill="#2a5189"/><rect x="5.7" y="19" width="3.3" height="6" fill="#2a5189"/><path d="M15.7 10.5 Q15.7 9 17 9.4 L25.8 12 Q27 12.4 27 13.6 V24 Q27 25 26 25 H16.7 Q15.7 25 15.7 24Z" fill="#b4c6de"/><rect x="17.5" y="15.5" width="2.2" height="2.2" fill="#2a5189"/><rect x="22" y="15.5" width="2.2" height="2.2" fill="#2a5189"/><rect x="19.6" y="20" width="2.5" height="5" fill="#2a5189"/></svg>
<svg class="a" style="left:462px;top:663px" width="27" height="26" viewBox="0 0 27 26"><path d="M2 4 H22.7 a2 2 0 0 1 2 2 V20 a2 2 0 0 1 -2 2 H19 V20.5 H15 V22 H9.5 V20.5 H5.5 V22 H2 a2 2 0 0 1 -2 -2 V6 a2 2 0 0 1 2 -2Z" fill="#b4c6de"/><circle cx="8.6" cy="9.3" r="2.6" fill="#2a5189"/><path d="M3 17 C3 13 14.2 13 14.2 17 Q14.2 18 13 18 H4.2 Q3 18 3 17Z" fill="#2a5189"/><path d="M16 8.2 H22 M16 11.5 H22 M16 14.7 H22" stroke="#2a5189" stroke-width="1.5"/></svg>
<svg class="a" style="left:549px;top:663px" width="27" height="26" viewBox="0 0 27 26"><path d="M10.5 10 H24 a2.5 2.5 0 0 1 2.5 2.5 V21.5 a2.5 2.5 0 0 1 -2.5 2.5 H22 L20.5 26 L19 24 H10.5 a2.5 2.5 0 0 1 -2.5 -2.5 V12.5 a2.5 2.5 0 0 1 2.5 -2.5Z" fill="#b4c6de"/><rect x="-0.3" y="-0.3" width="21.3" height="16.4" rx="2.8" fill="#2a5189"/><rect x="0" y="0" width="20.7" height="15.8" rx="2.5" fill="#f3f6fb"/><path d="M4.5 7.8 L8.5 11.5 L16 4" stroke="#2a5189" stroke-width="2.4" fill="none"/></svg>
<svg class="a" style="left:630px;top:663px" width="27" height="26" viewBox="0 0 27 26"><rect x="1.95" y="1" width="22.8" height="22.6" rx="4" stroke="#ffffff" stroke-width="2.3" fill="none"/><circle cx="8.5" cy="7.5" r="1.8" fill="#b4c6de"/><path d="M13.5 7.5 H21" stroke="#b4c6de" stroke-width="2"/><path d="M5.8 13.5 H21 M5.8 18.5 H21" stroke="#b4c6de" stroke-width="2.3"/></svg>
<svg class="a" style="left:709px;top:663px" width="27" height="26" viewBox="0 0 27 26"><path d="M1.5 7 L4.5 10 L10.5 4.2" stroke="#ffffff" stroke-width="2.5" fill="none"/><path d="M1.5 18.5 L4.5 21.5 L10.5 15.7" stroke="#ffffff" stroke-width="2.5" fill="none"/><path d="M14 4.5 H27 M14 17 H27" stroke="#b4c6de" stroke-width="2.5"/><path d="M14 9.8 H24 M14 22 H24" stroke="#b4c6de" stroke-width="2.5"/></svg>
<svg class="a" style="left:788px;top:663px" width="27" height="26" viewBox="0 0 27 26"><ellipse cx="13" cy="3.2" rx="12.5" ry="3" fill="#b4c6de"/><path d="M0.5 5.5 C3 7.7 23 7.7 25.5 5.5 V10 C23 12.5 3 12.5 0.5 10Z" fill="#f3f6fb"/><path d="M0.5 12.5 C3 14.7 23 14.7 25.5 12.5 V16.5 C23 19.0 3 19.0 0.5 16.5Z" fill="#f3f6fb"/><path d="M0.5 19 C3 21.2 23 21.2 25.5 19 V23 C23 25.5 3 25.5 0.5 23Z" fill="#f3f6fb"/><rect x="11.5" y="10.3" width="3" height="1.3" fill="#2a5189"/><rect x="11.5" y="16.8" width="3" height="1.3" fill="#2a5189"/><rect x="11.5" y="23.2" width="3" height="1.3" fill="#2a5189"/></svg>
<svg class="a" style="left:860px;top:663px" width="27" height="26" viewBox="0 0 27 26"><path d="M2.5 7.8 H12.5 a1.8 1.8 0 0 1 1.8 1.8 V15.2 a1.8 1.8 0 0 1 -1.8 1.8 H10.5 L8.7 19.7 L7 17 H2.5 a1.8 1.8 0 0 1 -1.8 -1.8 V9.6 a1.8 1.8 0 0 1 1.8 -1.8Z" fill="#f3f6fb"/><path d="M18 4 V21 M18 4 H21 M18 12.5 H21 M18 21 H21" stroke="#b4c6de" stroke-width="1.5" fill="none"/><rect x="21" y="2.5" width="4.6" height="3.2" fill="#ffffff"/><rect x="21" y="11" width="4.6" height="3.2" fill="#ffffff"/><rect x="21" y="19.4" width="4.6" height="3.2" fill="#ffffff"/></svg>
<svg class="a" style="left:938px;top:663px" width="27" height="26" viewBox="0 0 27 26"><rect x="1" y="18" width="5" height="7" fill="#b4c6de"/><rect x="8.5" y="11.5" width="5" height="13.5" fill="#b4c6de"/><rect x="15" y="13" width="5" height="12" fill="#b4c6de"/><rect x="22" y="9" width="4.5" height="16" fill="#b4c6de"/><path d="M3 12 L10 5.5 L17 8 L23.5 1.5" stroke="#f3f6fb" stroke-width="1.4" fill="none"/><circle cx="3" cy="12" r="1.8" fill="#f3f6fb"/><circle cx="10" cy="5.5" r="1.8" fill="#f3f6fb"/><circle cx="17" cy="8" r="1.8" fill="#f3f6fb"/><circle cx="23.5" cy="1.5" r="1.8" fill="#f3f6fb"/></svg>
<svg class="a" style="left:1004px;top:680px" width="24" height="10" viewBox="0 0 24 10"><circle cx="4.5" cy="5" r="2.4" fill="#fff"/><circle cx="12" cy="5" r="2.4" fill="#fff"/><circle cx="19.5" cy="5" r="2.4" fill="#fff"/></svg>
<svg class="a" style="left:1150px;top:660px" width="32" height="30" viewBox="0 0 32 30"><g transform="translate(5.5 3.5) scale(0.8)"><path d="M4 21.5 C1.5 17 4 11 9 7 C13 4 18 3 21 3.5 C17 4.5 13 6.5 10.5 9 C7.5 12 6 16 7 21 Z" fill="#b9cade"/><path d="M22.5 3 C26 2.5 27.5 4.5 26.5 8 C25 12 20 16.5 13 20 L12.5 17.5 C18 15 22.5 11.5 23.5 8 C24.3 5.5 23.5 4 22.5 3 Z" fill="#fff"/><path d="M12 14 C14 10 18 7 21 5.5 C20 8 17 11 12.5 14 Z" fill="#fff"/><path d="M10.5 9.5 C9 12 8 16 8.5 19 C9 21 10 22 12 21.5 C10.5 19 10 14 10.5 9.5 Z" fill="#9fb4cf"/></g><circle cx="25.1" cy="20.5" r="2.3" fill="#b9cade"/><circle cx="20.5" cy="22.8" r="1.6" fill="#b9cade"/><circle cx="16.4" cy="25.1" r="0.8" fill="#b9cade"/></svg>
<div class="a" style="left:1152px;top:691px;width:31px;height:16px;background:#1290e2;border-radius:3px"></div>
<div class="t" style="left:1147.50px;width:40px;text-align:center;top:695.00px;font-size:10px;line-height:10px;color:#fff;font-weight:bold;letter-spacing:-0.2px">BETA</div>
<svg class="a" style="left:1196px;top:668px" width="32" height="32" viewBox="0 0 32 32"><path d="M6.5 17 C6.5 9 10.5 4.5 16.5 4.5 C22.5 4.5 26.5 9 26.5 17" stroke="#a9bfdb" stroke-width="2.4" fill="none"/><ellipse cx="16.5" cy="17.1" rx="6.3" ry="8.6" fill="#f3f6fb"/><rect x="3.7" y="14.4" width="6" height="8.6" rx="2.6" fill="#a9bfdb"/><rect x="23.4" y="14.4" width="6" height="8.6" rx="2.6" fill="#a9bfdb"/><path d="M26 24 L18 29.5" stroke="#a9bfdb" stroke-width="1.4"/><ellipse cx="16.5" cy="29.5" rx="3" ry="1.6" fill="#a9bfdb"/></svg>
<svg class="a" style="left:1238px;top:655px" width="18" height="18" viewBox="0 0 18 18"><circle cx="9" cy="8.7" r="8.2" stroke="#5a7fb5" stroke-width="1.3" fill="none"/><path d="M5.3 7.2 L9 10.8 L12.7 7.2" stroke="#b5c7e0" stroke-width="1.4" fill="none"/></svg>
</body></html>
